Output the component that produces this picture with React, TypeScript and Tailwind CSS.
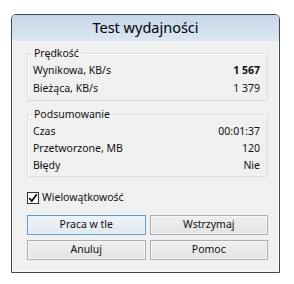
import React from "react";

const font = { fontFamily: '"Noto Sans", "Open Sans", sans-serif' };

function Row({ label, value, bold, tall }: { label: string; value: string; bold?: boolean; tall?: boolean }) {
  return (
    <div className={"flex justify-between items-center " + (tall ? "h-[18px]" : "h-[17px]")}>
      <span>{label}</span>
      <span className={bold ? "font-bold" : ""}>{value}</span>
    </div>
  );
}

function Group({ title, children, className }: { title: string; children: React.ReactNode; className?: string }) {
  return (
    <div
      className={
        "relative border border-[#d5dfe5] rounded-[2px] shadow-[inset_1px_1px_0_#ffffff] pl-[5px] pr-[7px] pt-[8px] pb-[2px] " +
        (className ?? "")
      }
    >
      <span className="absolute left-[4px] top-[-9px] px-[2px] bg-[#f0f0f0] leading-[16px]">{title}</span>
      {children}
    </div>
  );
}

function Btn({ children, focused }: { children: React.ReactNode; focused?: boolean }) {
  return (
    <button
      className={
        "h-[20px] flex items-center justify-center border text-[10.5px] text-[#111] " +
        (focused
          ? "border-[#5a9fd6] bg-gradient-to-b from-[#eef4f9] to-[#e1e9f1] shadow-[inset_0_0_0_1px_#eaf4fb]"
          : "border-[#adadad] bg-gradient-to-b from-[#efefef] to-[#e3e3e3] shadow-[inset_0_0_0_1px_#f6f6f6]")
      }
    >
      {children}
    </button>
  );
}

export default function App() {
  return (
    <div className="w-[294px] h-[284px] bg-white pt-[14px] pl-[11px]" style={font}>
      <div className="w-[269px] border border-[#3f4852] rounded-t-[5px] bg-[#f0f0f0] flex flex-col overflow-hidden text-[10.5px] text-[#111]">
        <div className="h-[26px] flex items-center justify-center bg-gradient-to-b from-[#c5d6e7] to-[#dbe7f2] text-[14.5px] text-black">
          Test wydajności
        </div>
        <div className="pl-[14px] pr-[10px] pt-[12px] pb-[11px] flex flex-col border-x border-b border-[#fafafa]">
          <Group title="Prędkość">
            <Row label="Wynikowa, KB/s" value="1 567" bold tall />
            <Row label="Bieżąca, KB/s" value="1 379" tall />
          </Group>
          <Group title="Podsumowanie" className="mt-[13px]">
            <Row label="Czas" value="00:01:37" />
            <Row label="Przetworzone, MB" value="120" />
            <Row label="Błędy" value="Nie" />
          </Group>
          <div className="flex items-center mt-[14px] h-[14px]">
            <div className="w-[12px] h-[12px] border border-[#333] bg-white flex items-center justify-center mr-[3px]">
              <svg width="10" height="10" viewBox="0 0 10 10">
                <path d="M1.2 5 L3.8 8 L8.8 1.3" stroke="#111" strokeWidth="1.9" fill="none" />
              </svg>
            </div>
            <span>Wielowątkowość</span>
          </div>
          <div className="grid grid-cols-2 gap-[4px] mt-[10px]">
            <Btn focused>Praca w tle</Btn>
            <Btn>Wstrzymaj</Btn>
          </div>
          <div className="grid grid-cols-2 gap-[4px] mt-[5px]">
            <Btn>Anuluj</Btn>
            <Btn>Pomoc</Btn>
          </div>
        </div>
      </div>
    </div>
  );
}
